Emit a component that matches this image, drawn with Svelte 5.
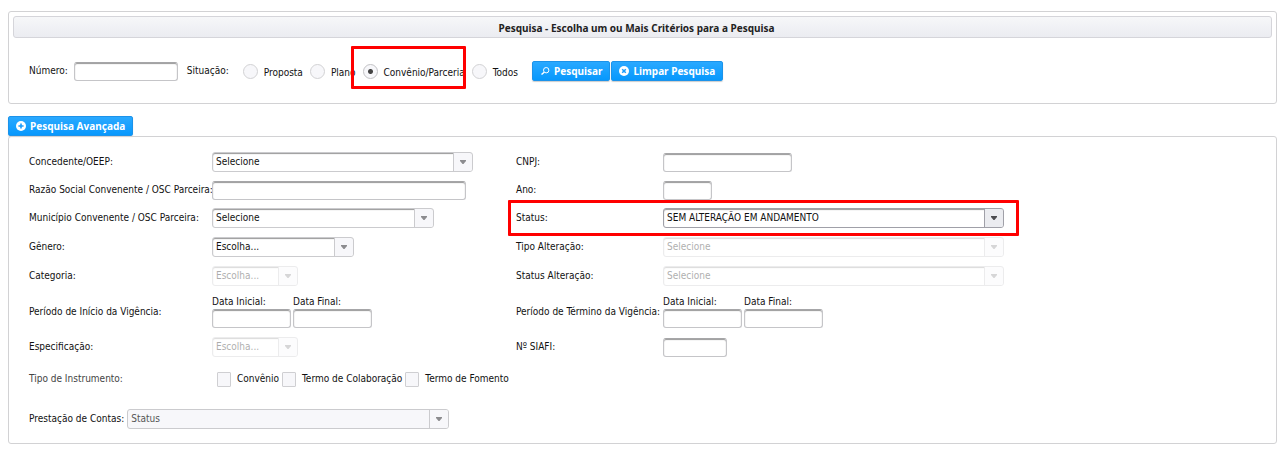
<script>
  const situacoes = ['Proposta', 'Plano', 'Convênio/Parceria', 'Todos'];
  const instrumentos = ['Convênio', 'Termo de Colaboração', 'Termo de Fomento'];
  let situacao = $state('Convênio/Parceria');
</script>

{#snippet combo(id, text, size, state)}
  <span class="combo {size} {state}">
    <select {id} disabled={state === 'disabled'}><option>{text}</option></select>
    <span class="trigger" aria-hidden="true">
      <svg width="6" height="4" viewBox="0 0 6 4"><path d="M0 0H6V1L3.5 4H2.5L0 1Z" fill="currentColor" /></svg>
    </span>
  </span>
{/snippet}

{#snippet dates(prefix)}
  <div class="dates">
    <label>Data Inicial:<input type="text" name="{prefix}-inicial" /></label>
    <label>Data Final:<input type="text" name="{prefix}-final" /></label>
  </div>
{/snippet}

<main>
  <section class="panel search">
    <h1>Pesquisa - Escolha um ou Mais Critérios para a Pesquisa</h1>
    <form class="line" onsubmit={(e) => e.preventDefault()}>
      <label for="numero">Número:</label>
      <input id="numero" class="numero" type="text" />
      <span class="situacao">Situação:</span>
      <div class="radios" role="radiogroup" aria-label="Situação">
        {#each situacoes as nome}
          <label class:marked={nome === 'Convênio/Parceria'}>
            <input type="radio" name="situacao" value={nome} bind:group={situacao} />
            <span>{nome}</span>
          </label>
        {/each}
      </div>
      <div class="actions">
        <button type="submit">
          <svg width="10" height="10" viewBox="0 0 10 10" fill="none" stroke="#fff"><circle cx="6.2" cy="4.2" r="2.7" /><path d="M4.2 6.2L1.5 8.5" stroke-width="1.5" /></svg>
          Pesquisar
        </button>
        <button type="reset">
          <svg width="10" height="10" viewBox="0 0 10 10"><circle cx="5" cy="5" r="5" fill="#fff" /><path d="M3.2 3.2L6.8 6.8M6.8 3.2L3.2 6.8" stroke="#1a9dfc" stroke-width="1.5" /></svg>
          Limpar Pesquisa
        </button>
      </div>
    </form>
  </section>

  <button class="toggle" type="button">
    <svg width="10" height="10" viewBox="0 0 10 10"><circle cx="5" cy="5" r="5" fill="#fff" /><path d="M5 2.4V7.6M2.4 5H7.6" stroke="#1a9dfc" stroke-width="1.6" /></svg>
    Pesquisa Avançada
  </button>

  <section class="panel advanced">
    <div class="grid">
      <label for="concedente">Concedente/OEEP:</label>
      {@render combo('concedente', 'Selecione', 'w261', '')}
      <label for="cnpj">CNPJ:</label>
      <input id="cnpj" class="w129" type="text" />

      <label for="razao">Razão Social Convenente / OSC Parceira:</label>
      <input id="razao" class="w254" type="text" />
      <label for="ano">Ano:</label>
      <input id="ano" class="w49" type="text" />

      <label for="municipio">Município Convenente / OSC Parceira:</label>
      {@render combo('municipio', 'Selecione', 'w222', '')}
      <div class="status">
        <label for="status">Status:</label>
        {@render combo('status', 'SEM ALTERAÇÃO EM ANDAMENTO', 'w341', 'active')}
      </div>

      <label for="genero">Gênero:</label>
      {@render combo('genero', 'Escolha...', 'w142', '')}
      <label for="tipo">Tipo Alteração:</label>
      {@render combo('tipo', 'Selecione', 'w341', 'disabled')}

      <label for="categoria">Categoria:</label>
      {@render combo('categoria', 'Escolha...', 'w86', 'disabled')}
      <label for="status-alteracao">Status Alteração:</label>
      {@render combo('status-alteracao', 'Selecione', 'w341', 'disabled')}

      <span>Período de Início da Vigência:</span>
      {@render dates('inicio')}
      <span>Período de Término da Vigência:</span>
      {@render dates('termino')}

      <label for="especificacao">Especificação:</label>
      {@render combo('especificacao', 'Escolha...', 'w86', 'disabled')}
      <label for="siafi">Nº SIAFI:</label>
      <input id="siafi" class="w64" type="text" />

      <span class="light">Tipo de Instrumento:</span>
      <div class="checks">
        {#each instrumentos as nome}
          <label><input type="checkbox" /><span>{nome}</span></label>
        {/each}
      </div>
    </div>
    <div class="contas">
      <label for="contas">Prestação de Contas:</label>
      {@render combo('contas', 'Status', 'w322', 'shaded')}
    </div>
  </section>
</main>

<style>
  :global(body) {
    margin: 0;
    background: #fff;
  }
  main {
    padding: 11px 11px 6px 8px;
    color: #111;
    font: 10px/14px 'DejaVu Sans Condensed', Tahoma, sans-serif;
  }
  main :global(*) {
    box-sizing: border-box;
  }
  .panel {
    border: 1px solid #d2d2d4;
    border-radius: 3px;
  }
  .search {
    padding: 4px 4px 21px;
  }
  h1 {
    margin: 0;
    padding: 4px 15px 2px 3px;
    border: 1px solid #d5d5da;
    border-radius: 3px;
    background: linear-gradient(#f6f7f9, #ebecf1);
    color: #222;
    font: bold 10px/14px 'Noto Sans', Tahoma, sans-serif;
    text-align: center;
  }
  .line {
    display: flex;
    align-items: center;
    margin-top: 22px;
    padding-left: 16px;
    height: 22px;
  }
  input,
  select,
  button {
    margin: 0;
    color: inherit;
    font: inherit;
  }
  input[type='text'] {
    height: 19px;
    padding: 0 3px;
    border: 1px solid #c5c5c8;
    border-top-color: #a6a6a8;
    border-radius: 3px;
    background: #fff;
    box-shadow: inset 0 1px 1px #999;
  }
  .numero {
    width: 104px;
    margin-left: 6px;
  }
  .situacao {
    margin-left: 9px;
  }
  .radios {
    display: flex;
    gap: 7px;
    margin-left: 14px;
  }
  .radios label {
    position: relative;
    display: flex;
    align-items: center;
    gap: 6px;
  }
  .radios span {
    padding-top: 3px;
  }
  input[type='radio'] {
    appearance: none;
    width: 15px;
    height: 15px;
    border: 1px solid #d2d2d4;
    border-radius: 50%;
    background: #f7f7fa;
  }
  input[type='radio']:checked {
    border-color: #c2c2c5;
    background: radial-gradient(circle, #444 2px, #f7f7fa 3px);
  }
  .marked::after {
    content: '';
    position: absolute;
    inset: -17px -1px -9px -12px;
    border: 3px solid #f00;
    border-radius: 1px;
    pointer-events: none;
  }
  .actions {
    display: flex;
    gap: 1px;
    margin-left: 14px;
  }
  button {
    display: flex;
    align-items: center;
    gap: 4px;
    height: 20px;
    padding: 0 7px;
    border: 1px solid #1c93ea;
    border-radius: 2px;
    background: linear-gradient(#2aa9ff, #0798fd);
    box-shadow: 0 1px 1px #ccc;
    color: #fff;
    font: bold 10px/14px 'Noto Sans', Verdana, sans-serif;
    white-space: nowrap;
  }
  .toggle {
    margin-top: 12px;
  }
  .advanced {
    padding: 15px 20px 14px;
  }
  .grid {
    display: grid;
    grid-template-columns: 183px 304px 147px 1fr;
    grid-template-rows: 20px 18px 20px 20px 20px 33px 20px 26px;
    row-gap: 9px;
    align-items: center;
    white-space: nowrap;
  }
  .status {
    position: relative;
    grid-column: 3 / 5;
    display: grid;
    grid-template-columns: 147px auto;
    align-items: center;
    justify-self: start;
  }
  .status::after {
    content: '';
    position: absolute;
    inset: -8px -15px -8px -8px;
    border: 3px solid #f00;
    border-radius: 1px;
    pointer-events: none;
  }
  .combo {
    --line: #cbcbce;
    display: flex;
    height: 20px;
    border: 1px solid var(--line);
    border-radius: 3px;
    background: #fff;
    color: #111;
    position: relative;
  }
  select {
    appearance: none;
    flex: 1;
    min-width: 0;
    padding: 0 22px 0 3px;
    border: 0;
    border-radius: 2px;
    background: none;
    box-shadow: inset 0 1px 1px #999;
    opacity: 1;
  }
  .trigger {
    position: absolute;
    inset: 0 0 0 auto;
    display: grid;
    place-items: center;
    width: 19px;
    border-left: 1px solid var(--line);
    border-radius: 0 2px 2px 0;
    background: #f7f7fa;
    color: #8c8c8f;
    pointer-events: none;
  }
  .active {
    --line: #a0a0a8;
  }
  .active .trigger {
    background: #ebecf0;
    color: #4c4c50;
  }
  .disabled {
    opacity: 0.35;
  }
  .shaded {
    background: #f7f7fa;
    color: #555;
  }
  .shaded select {
    box-shadow: none;
  }
  .w49 { width: 49px; }
  .w64 { width: 64px; }
  .w86 { width: 86px; }
  .w129 { width: 129px; }
  .w142 { width: 142px; }
  .w222 { width: 222px; }
  .w254 { width: 254px; }
  .w261 { width: 261px; }
  .w322 { width: 322px; }
  .w341 { width: 341px; }
  .dates {
    display: flex;
    gap: 2px;
  }
  .dates label {
    display: flex;
    flex-direction: column;
    width: 79px;
  }
  .light {
    color: #444;
  }
  .checks {
    display: flex;
    gap: 3px;
    padding-left: 5px;
  }
  .checks label {
    display: flex;
    align-items: center;
    gap: 6px;
  }
  input[type='checkbox'] {
    appearance: none;
    width: 14px;
    height: 15px;
    border: 1px solid #cfcfd2;
    border-radius: 1px;
    background: #f7f7fa;
  }
  .contas {
    display: flex;
    align-items: center;
    gap: 3px;
    margin-top: 17px;
  }
</style>
